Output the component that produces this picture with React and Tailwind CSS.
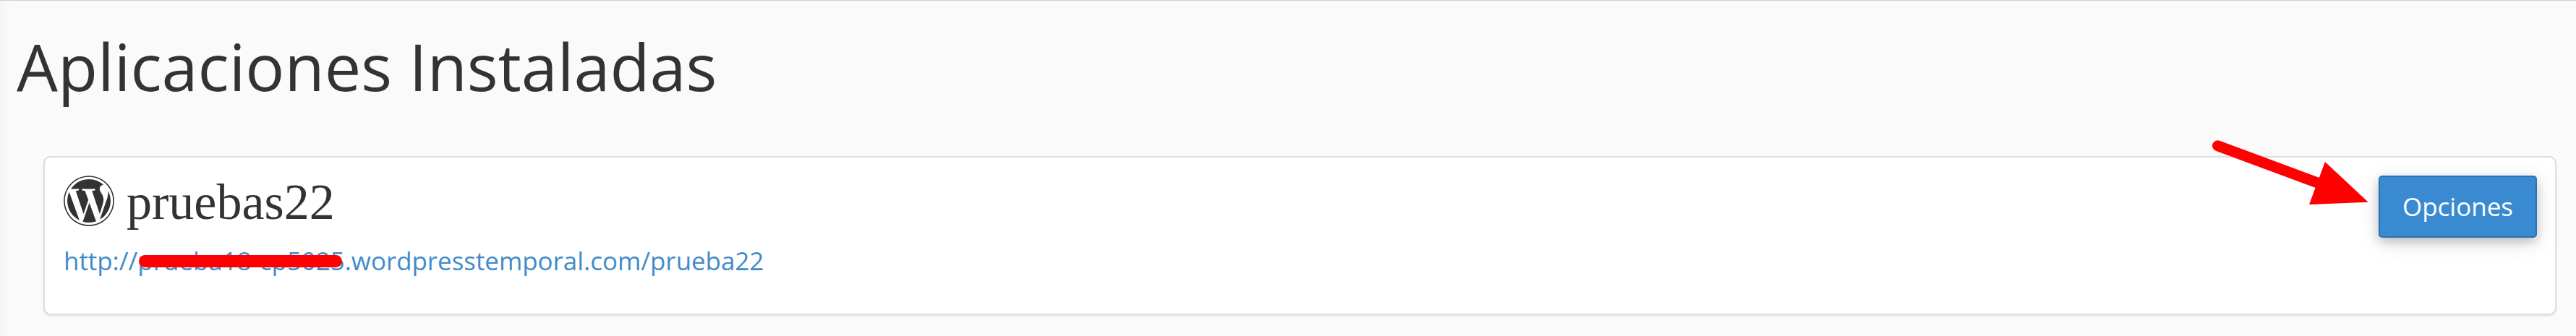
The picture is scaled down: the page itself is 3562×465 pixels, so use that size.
import { FaWordpress } from 'react-icons/fa'

export default function App() {
  return (
    <main className="relative h-[465px] w-[3562px] overflow-hidden border-t border-[#cfcfcf] bg-[#fafafa] font-['Open_Sans',sans-serif] text-[#333333]">
      <div className="absolute inset-y-0 left-0 w-4 bg-linear-to-r from-[#f5f5f5] to-[#fafafa]" />
      <h1 className="relative pt-[29px] pl-[23px] text-[90px] leading-[122px] whitespace-nowrap">
        Aplicaciones Instaladas
      </h1>
      <AppCard name="pruebas22" url="http://prueba18-cp5025.wordpresstemporal.com/prueba22" />
      <Arrow />
    </main>
  )
}

function AppCard({ name, url }) {
  return (
    <section className="mt-[64px] ml-[60px] flex h-[220px] w-[3475px] justify-between rounded-[10px] border-2 border-[#dddddd] bg-white pt-[24px] pr-[25px] pl-[25px] shadow-[0_1px_0_#e8e8e8,0_2px_3px_rgba(0,0,0,0.06)]">
      <div>
        <div className="flex h-[72px] items-start gap-[16px]">
          <FaWordpress className="size-[72px]" />
          <h2 className="pt-[2px] font-['Liberation_Serif',serif] text-[70px] leading-[72px]">{name}</h2>
        </div>
        <div className="relative mt-[23px] w-max">
          <a href="#" className="block pl-px text-[34.9px] leading-[48px] text-[#428bca]">{url}</a>
          <span className="absolute top-[16px] left-[105px] h-[17px] w-[281px] rounded-full bg-[#ff0000]" />
        </div>
      </div>
      <button className="mt-px h-[86px] w-[219px] rounded-[5px] border-2 border-[#2a72b5] bg-[#3a8ad2] text-[35px] leading-[48px] text-white shadow-[0_6px_14px_rgba(0,0,0,0.18),0_6px_30px_rgba(0,0,0,0.12)]">
        Opciones
      </button>
    </section>
  )
}

function Arrow() {
  return (
    <svg className="absolute top-[189px] left-[3050px]" width="230" height="105" viewBox="0 0 230 105" fill="none">
      <path d="M16.6 11.7L156 63.5" stroke="#ff0000" strokeWidth="15" strokeLinecap="round" />
      <path d="M165 34L224.7 89.7L143 93Z" fill="#ff0000" />
    </svg>
  )
}
